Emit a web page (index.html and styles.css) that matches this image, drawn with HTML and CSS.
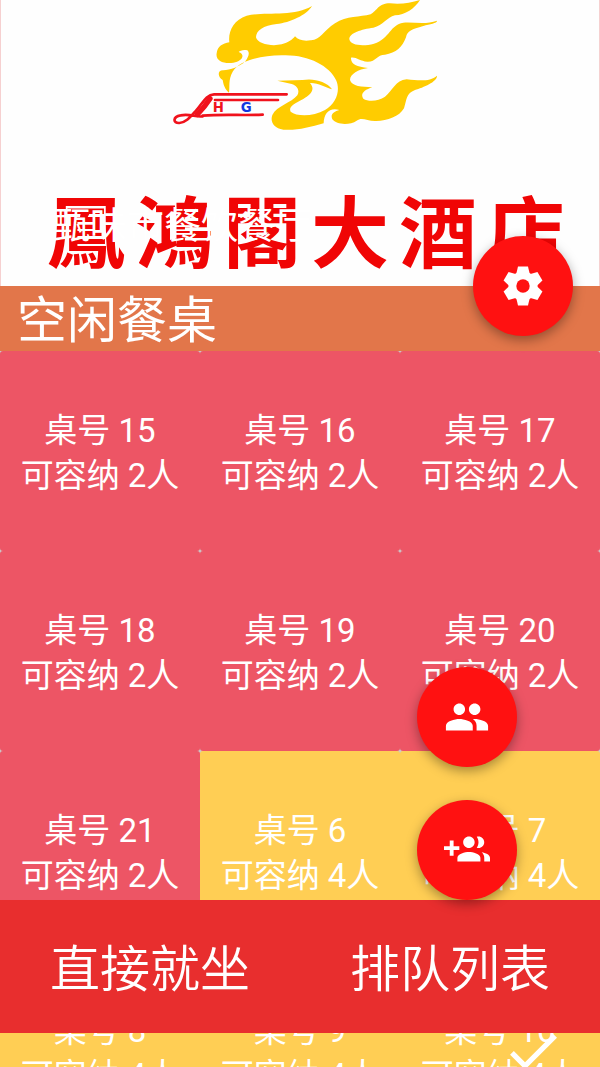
FILE: index.html
```
<!DOCTYPE html>
<html lang="zh-CN">

<head>
    <meta charset="UTF-8">
    <meta name="viewport" content="width=device-width, initial-scale=1.0">
    <title>空闲餐桌</title>
    <link rel="stylesheet" href="styles.css">
</head>

<body>
    <div class="app">
        <!-- 餐厅头图 -->
        <header class="hero">
            <svg class="logo" viewBox="-15 0 870 420" aria-hidden="true">
                <path fill="#fc0" d="M456 18C440 45 390 68 350 72C310 76 288 92 288 112C292 132 335 140 365 133C385 128 398 118 405 109C415 120 430 124 452 121C480 122 490 92 525 70C560 47 600 52 632 43C652 32 655 10 690 10C725 14 750 8 780 0C765 25 735 45 705 46C680 52 670 76 640 83C605 88 568 98 568 118C572 137 610 140 642 131C690 115 690 74 730 68C765 66 800 74 831 62C832 70 810 73 790 78C755 88 742 92 738 112C728 140 708 160 675 164C650 164 648 186 622 185C600 184 588 170 573 173C572 192 590 200 624 204C595 208 570 222 570 240C576 260 605 260 637 262C612 270 600 282 610 296C625 306 655 304 675 290C700 270 705 242 740 238C780 242 810 245 831 227C832 245 790 262 765 270C738 280 740 300 732 325C718 350 680 364 645 363C620 362 605 350 590 362C570 376 530 375 517 358C510 343 522 334 538 330C508 322 492 340 491 370C450 382 410 392 370 389C340 384 330 365 337 345C350 318 395 308 412 286C420 270 412 258 395 252L352 242L428 240C460 234 500 244 516 268C495 262 475 248 450 249C468 270 450 285 430 297C400 312 385 322 392 335C410 350 460 350 495 330C530 310 542 270 528 240C508 196 440 162 365 166C300 168 240 180 218 215C204 240 210 260 207 278C194 268 190 252 188 240C172 230 172 210 190 211C210 210 240 200 256 184C266 170 270 158 262 151C250 148 240 152 236 156C258 164 246 185 220 188C190 192 166 182 170 160C172 140 188 130 208 127C204 95 220 60 260 47C310 34 400 52 456 18Z"/>
                <g fill="none" stroke="#f0121c" stroke-linecap="round">
                    <path stroke-width="8" d="M380 283H162C138 284 128 310 108 332C92 350 78 368 58 369C38 370 38 350 62 346C90 340 106 352 128 349"/>
                    <path stroke-width="8" d="M354 300H165M128 347C190 342 250 347 308 344"/>
                    <path stroke-width="16" d="M150 296C138 315 125 330 112 343"/>
                </g>
                <text class="mark mark-h" x="158" y="337">H</text>
                <text class="mark mark-g" x="242" y="337">G</text>
            </svg>
            <div class="hotel-name">
                <span>鳳</span><span>鴻</span><span>閣</span><span>大</span><span>酒</span><span>店</span>
            </div>
            <h1 class="hero-title">甄味市餐饮餐厅</h1>
            <button class="fab fab-settings" aria-label="设置">
                <svg viewBox="-12 -12 24 24">
                    <circle r="7.6"/>
                    <path id="tooth" d="M-3.6-6L-2.6-10.2H2.6L3.6-6V6L2.6 10.2H-2.6L-3.6 6z"/>
                    <use href="#tooth" transform="rotate(60)"/>
                    <use href="#tooth" transform="rotate(120)"/>
                    <circle class="gear-hole" r="3.5"/>
                </svg>
            </button>
        </header>

        <h2 class="section-title">空闲餐桌</h2>

        <!-- 餐桌列表 -->
        <main class="tables">
            <button class="table small"><span>桌号 15</span><span>可容纳 2人</span></button>
            <button class="table small"><span>桌号 16</span><span>可容纳 2人</span></button>
            <button class="table small"><span>桌号 17</span><span>可容纳 2人</span></button>
            <button class="table small"><span>桌号 18</span><span>可容纳 2人</span></button>
            <button class="table small"><span>桌号 19</span><span>可容纳 2人</span></button>
            <button class="table small"><span>桌号 20</span><span>可容纳 2人</span></button>
            <button class="table small"><span>桌号 21</span><span>可容纳 2人</span></button>
            <button class="table medium"><span>桌号 6</span><span>可容纳 4人</span></button>
            <button class="table medium"><span>桌号 7</span><span>可容纳 4人</span></button>
            <button class="table medium"><span>桌号 8</span><span>可容纳 4人</span></button>
            <button class="table medium"><span>桌号 9</span><span>可容纳 4人</span></button>
            <button class="table medium"><span>桌号 10</span><span>可容纳 4人</span></button>
        </main>

        <svg class="check" viewBox="0 0 24 24" aria-hidden="true"><path d="M9 16.2L4.8 12l-1.4 1.4L9 19 21 7l-1.4-1.4L9 16.2z"/></svg>

        <!-- 底部操作栏 -->
        <nav class="bottom-bar">
            <button>直接就坐</button>
            <button>排队列表</button>
        </nav>

        <div class="fab-menu">
            <button class="fab" aria-label="顾客">
                <svg viewBox="0 0 24 24"><path d="M16 11c1.66 0 2.99-1.34 2.99-3S17.66 5 16 5c-1.66 0-3 1.34-3 3s1.34 3 3 3zm-8 0c1.66 0 2.99-1.34 2.99-3S9.66 5 8 5C6.34 5 5 6.34 5 8s1.34 3 3 3zm0 2c-2.33 0-7 1.17-7 3.5V19h14v-2.5c0-2.33-4.67-3.5-7-3.5zm8 0c-.29 0-.62.02-.97.05 1.16.84 1.97 1.97 1.97 3.45V19h6v-2.5c0-2.33-4.67-3.5-7-3.5z"/></svg>
            </button>
            <button class="fab" aria-label="添加顾客">
                <svg viewBox="0 0 24 24"><path d="M8 10H5V7H3v3H0v2h3v3h2v-3h3v-2zm10 1c1.66 0 2.99-1.34 2.99-3S19.66 5 18 5c-.32 0-.63.05-.91.14.57.81.9 1.79.9 2.86s-.34 2.04-.9 2.86c.28.09.59.14.91.14zm-5 0c1.66 0 2.99-1.34 2.99-3S14.66 5 13 5c-1.66 0-3 1.34-3 3s1.34 3 3 3zm6.62 2.16c.83.73 1.38 1.66 1.38 2.84v2h3v-2c0-1.54-2.37-2.49-4.38-2.84zM13 13c-2 0-6 1-6 3v2h12v-2c0-2-4-3-6-3z"/></svg>
            </button>
        </div>
    </div>
</body>

</html>
```

FILE: styles.css
```
* {
    box-sizing: border-box;
}

body {
    margin: 0;
    font-family: Roboto, "Noto Sans CJK SC", sans-serif;
    color: #fff;
    background: #ccc;
}

h1,
h2 {
    margin: 0;
    font-weight: 400;
}

button {
    margin: 0;
    padding: 0;
    border: 0;
    font-family: inherit;
    font-weight: 350;
    color: inherit;
    cursor: pointer;
}

.app {
    position: relative;
    height: 100vh;
    overflow: hidden;
}

/* 头图 */
.hero {
    position: relative;
    height: 286px;
    border: 1px solid #f6d0d0;
    border-width: 0 1px;
    background: #fefefe;
}

.logo {
    display: block;
    width: 290px;
    height: 140px;
    margin: 0 auto;
}

.mark {
    font-family: "DejaVu Sans", sans-serif;
    font-weight: bold;
    font-size: 40px;
}

.mark-h {
    fill: #f0121c;
}

.mark-g {
    fill: #1238e0;
}

.hotel-name {
    display: flex;
    justify-content: space-between;
    padding: 38px 34px 0 46px;
    font-family: "Noto Sans CJK SC", sans-serif;
    font-weight: bold;
    font-size: 78px;
    line-height: 100px;
    color: #f00505;
}

.hero-title {
    position: absolute;
    left: 52px;
    top: 202px;
    font-size: 37px;
    line-height: 50px;
}

.section-title {
    padding: 6px 17px 0;
    font-size: 50px;
    line-height: 59px;
    background: #e2764a;
}

/* 餐桌 */
.tables {
    display: grid;
    grid-template-columns: repeat(3, 1fr);
}

.table {
    display: flex;
    flex-direction: column;
    align-items: center;
    justify-content: center;
    aspect-ratio: 1;
    padding-top: 3px;
    border-radius: 3px;
    font-size: 33px;
    font-weight: 400;
    line-height: 45px;
}

.small {
    background: #ed5565;
}

.medium {
    background: #ffce54;
}

.bottom-bar {
    position: absolute;
    left: 0;
    right: 0;
    bottom: 34px;
    display: flex;
    background: #e82e2e;
}

.bottom-bar button {
    flex: 1;
    padding: 38px 0 30px;
    font-size: 50px;
    line-height: 65px;
    background: none;
}

.check {
    position: absolute;
    right: 35px;
    bottom: -16px;
    width: 64px;
    height: 64px;
    fill: #fff;
}

/* 悬浮按钮 */
.fab {
    display: flex;
    align-items: center;
    justify-content: center;
    width: 100px;
    height: 100px;
    border-radius: 50%;
    background: #f11;
    box-shadow: 0 4px 12px rgba(0, 0, 0, 0.35);
}

.fab svg {
    width: 46px;
    height: 46px;
    fill: #fff;
}

.fab .gear-hole {
    fill: #f11;
}

.fab-settings {
    position: absolute;
    right: 26px;
    bottom: -50px;
}

.fab-menu {
    position: absolute;
    right: 83px;
    bottom: 167px;
    display: flex;
    flex-direction: column;
    gap: 33px;
}
```
